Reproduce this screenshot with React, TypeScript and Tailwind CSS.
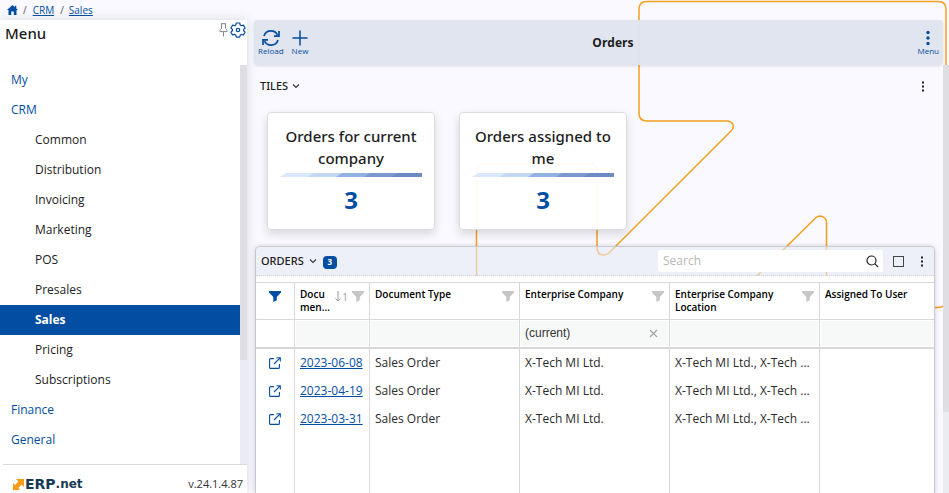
import type { ReactNode } from "react";

type MenuEntry = { label: string; level: 0 | 1; active?: boolean };

const menuEntries: MenuEntry[] = [
  { label: "My", level: 0 },
  { label: "CRM", level: 0 },
  { label: "Common", level: 1 },
  { label: "Distribution", level: 1 },
  { label: "Invoicing", level: 1 },
  { label: "Marketing", level: 1 },
  { label: "POS", level: 1 },
  { label: "Presales", level: 1 },
  { label: "Sales", level: 1, active: true },
  { label: "Pricing", level: 1 },
  { label: "Subscriptions", level: 1 },
  { label: "Finance", level: 0 },
  { label: "General", level: 0 },
];

const tiles = [
  { title: "Orders for current company", value: 3 },
  { title: "Orders assigned to me", value: 3 },
];

const orders = [
  { date: "2023-06-08", type: "Sales Order", company: "X-Tech MI Ltd.", location: "X-Tech MI Ltd., X-Tech ..." },
  { date: "2023-04-19", type: "Sales Order", company: "X-Tech MI Ltd.", location: "X-Tech MI Ltd., X-Tech ..." },
  { date: "2023-03-31", type: "Sales Order", company: "X-Tech MI Ltd.", location: "X-Tech MI Ltd., X-Tech ..." },
];

function Backdrop() {
  return (
    <svg className="pointer-events-none absolute left-0 top-0" width="949" height="493" fill="none" stroke="#f59f1e" strokeWidth="1.5" aria-hidden="true">
      <path d="M476.500 493V171q0-7 7-7H590q7 0 7 7V247q0 8 6 8q3 0 6-2L731 131q4-4 1-8q-2-2-5-2H647q-8 0-8-8V9q0-7.500 8-7.500H938q8 0 8 7.500V300q0 7.500-8 7.500H834q-7.500 0-7.500-7V223q0-6-6-7q-3 0-5 2L700 332" />
    </svg>
  );
}

function HomeIcon() {
  return (
    <svg width="11" height="10" viewBox="0 0 11 10" fill="#034ea2" aria-hidden="true">
      <path d="M5.500 0 0 5h1.500v5h2.700V6.500h2.600V10h2.700V5H11L9.300 3.400V.8H8v1.400z" />
    </svg>
  );
}

function PinIcon() {
  return (
    <svg width="9" height="14" viewBox="0 0 9 14" fill="none" stroke="#83878c" aria-hidden="true">
      <path d="M2 .700h5M2.500.800v4.700C1.500 6.200.900 7.200.900 8.600h7.200c0-1.400-.6-2.400-1.600-3.100V.800M4.500 8.800v4.700" />
    </svg>
  );
}

function GearIcon() {
  return (
    <svg width="16" height="16" viewBox="0 0 16 16" fill="none" stroke="#034ea2" strokeWidth="1.200" strokeLinejoin="round" aria-hidden="true">
      <path d="M6.300 1h3.400l.5 2 1.200.7 2-.6 1.700 2.900-1.500 1.400v1.300l1.500 1.400-1.700 2.900-2-.6-1.200.7-.5 2H6.300l-.5-2-1.200-.7-2 .6-1.700-2.900 1.500-1.400V7.400L.900 6l1.700-2.900 2 .6L5.800 3z" />
      <circle cx="8" cy="8" r="1.700" />
    </svg>
  );
}

function ReloadIcon() {
  return (
    <svg width="18" height="16" viewBox="0 0 18 16" fill="none" stroke="#034ea2" strokeWidth="1.700" aria-hidden="true">
      <path d="M2 6C3 2.700 5.700.900 9 .900c3 0 5.100 1.300 6.500 4M17 1v5.200h-5M16 10c-1 3.300-3.700 5.100-7 5.100-3 0-5.100-1.300-6.500-4M1 15V9.800h5" />
    </svg>
  );
}

function PlusIcon() {
  return (
    <svg width="16" height="16" viewBox="0 0 16 16" stroke="#034ea2" strokeWidth="1.500" strokeLinecap="round" aria-hidden="true">
      <path d="M8 1v14M1 8h14" />
    </svg>
  );
}

function ChevronIcon() {
  return (
    <svg width="8" height="6" viewBox="0 0 8 6" fill="none" stroke="#333" strokeWidth="1.100" aria-hidden="true">
      <path d="m1 1.500 3 3 3-3" />
    </svg>
  );
}

function DotsIcon() {
  return (
    <svg width="4" height="11" viewBox="0 0 4 11" fill="#222" aria-hidden="true">
      <path d="M1 0.500h2v2H1zM1 4.500h2v2H1zM1 8.500h2v2H1z" />
    </svg>
  );
}

function FunnelIcon({ color }: { color: string }) {
  return (
    <svg className="shrink-0" width="12" height="11" viewBox="0 0 12 11" fill={color} aria-hidden="true">
      <path d="M0 0h12v1.500L7.800 6v3.300L4.300 11V6L0 1.500z" />
    </svg>
  );
}

function OpenIcon() {
  return (
    <svg width="12" height="12" viewBox="0 0 12 12" fill="none" stroke="#034ea2" strokeWidth="1.100" aria-hidden="true">
      <path d="M5 1.600H1.600q-1 0-1 1v7.800q0 1 1 1h7.800q1 0 1-1V7M5 7l5.800-5.800M7.500.700h3.800v3.800" />
    </svg>
  );
}

function HeadCell({ children, icons }: { children: ReactNode; icons?: ReactNode }) {
  return (
    <th className="h-[37px] border-l border-t border-[#d8d8d8] px-[5px] py-[5px] text-left align-top text-[10px] font-semibold leading-[13px] text-black">
      <div className="flex items-start justify-between">
        <span>{children}</span>
        <span className="flex items-center gap-1 pt-[3px]">{icons}</span>
      </div>
    </th>
  );
}

function FilterCell({ label, value = "" }: { label: string; value?: string }) {
  return (
    <td className="h-[30px] border-b-2 border-l border-t border-[#d8d8d8] p-px">
      <div className="flex h-full items-center bg-[#f7f9f9] pl-1 pr-[10px]">
        <input aria-label={label} defaultValue={value} className="h-[24px] w-full min-w-0 bg-transparent pb-px font-['Liberation_Sans',Arial,sans-serif] text-[12px] text-[#333] outline-none" />
        {value && (
          <button aria-label="Clear filter">
            <svg width="9" height="9" viewBox="0 0 9 9" stroke="#a4a4a4" strokeWidth="1.200" aria-hidden="true">
              <path d="m1 1 7 7M8 1 1 8" />
            </svg>
          </button>
        )}
      </div>
    </td>
  );
}

function Sidebar() {
  return (
    <aside className="relative flex w-[247px] shrink-0 flex-col bg-white shadow-[0_0_10px_rgba(60,60,90,0.16)]">
      <div className="flex h-[45px] shrink-0 items-start justify-between pl-[5px] pr-px pt-[2px]">
        <h2 className="font-['Noto_Sans',sans-serif] text-[15px] font-medium leading-[22px] text-[#1d1d1d]">Menu</h2>
        <div className="flex items-center gap-[2px]">
          <button aria-label="Pin menu"><PinIcon /></button>
          <button aria-label="Settings"><GearIcon /></button>
        </div>
      </div>
      <div className="flex min-h-0 flex-1">
        <nav className="min-w-0 flex-1 overflow-hidden">
          {menuEntries.map((entry) => (
            <a
              key={entry.label}
              href="#"
              className={`block h-[30px] text-[12px] leading-[29px] ${entry.level ? "pl-[35px]" : "pl-[11px] text-[#034ea2]"} ${
                entry.active ? "bg-[#034ea2] font-bold text-white" : entry.level ? "text-[#222]" : ""
              }`}
            >
              {entry.label}
            </a>
          ))}
        </nav>
        <div className="w-[7px] bg-[#ebebf2]">
          <div className="h-[74%] bg-[#dedee3]" />
        </div>
      </div>
      <div className="ml-[3px] flex h-[29px] shrink-0 items-center justify-between border-t border-[#d9dade] pl-[10px] pr-1 pt-[10px]">
        <div className="flex items-center font-['DejaVu_Sans',sans-serif] font-bold leading-[14px] text-[#173a54]">
          <svg width="11" height="11" viewBox="0 0 11 11" fill="#f59c1a" aria-hidden="true">
            <path d="M3 0h8v8L8.700 5.700 5.300 9l1.900 2H0V4l2 2 3.400-3.600z" />
          </svg>
          <span className="pl-px text-[14px]">ERP</span>
          <span className="text-[12px]">.net</span>
        </div>
        <span className="text-[11px] leading-[14px] text-[#333]">v.24.1.4.87</span>
      </div>
    </aside>
  );
}

function Toolbar() {
  return (
    <header className="flex h-[45px] shrink-0 items-center rounded-[4px] bg-[#dfe4ee]/95 px-1 text-[8px] leading-[8px] text-[#034ea2] shadow-[0_1px_3px_rgba(0,0,0,0.12)]">
      <div className="flex gap-2">
        <button className="flex flex-col items-center gap-px"><ReloadIcon />Reload</button>
        <button className="flex flex-col items-center gap-px"><PlusIcon />New</button>
      </div>
      <h1 className="flex-1 text-center text-[12px] font-bold leading-[16px] text-[#1c1c1c]">Orders</h1>
      <button className="flex flex-col items-center gap-px">
        <svg width="4" height="16" viewBox="0 0 4 16" fill="#034ea2" aria-hidden="true">
          <circle cx="2" cy="2.500" r="1.700" /><circle cx="2" cy="8" r="1.700" /><circle cx="2" cy="13.500" r="1.700" />
        </svg>
        Menu
      </button>
    </header>
  );
}

function Tile({ title, value }: { title: string; value: number }) {
  return (
    <article className="flex h-[118px] w-[168px] flex-col items-center rounded-[4px] border border-[#dcdce0] bg-white/95 px-3 pt-3 text-center shadow-[0_4px_10px_rgba(0,0,0,0.14)]">
      <h3 className="font-['Noto_Sans',sans-serif] text-[15px] font-medium leading-[22px] text-[#1d1d1d]">{title}</h3>
      <svg className="mt-1 shrink-0" width="142" height="4" viewBox="0 0 142 4" aria-hidden="true">
        <path d="M6 0h136v4H0z" fill="#dbe8f9" />
        <path d="M34 0h108v4H28z" fill="#c3d7f1" />
        <path d="M62 0h80v4H56z" fill="#92b2df" />
        <path d="M90 0h52v4H84z" fill="#7c98cf" />
        <path d="M118 0h24v4H111z" fill="#6c8ac4" />
      </svg>
      <p className="mt-[5px] text-[24px] font-bold leading-[36px] text-[#034ea2]">{value}</p>
    </article>
  );
}

function OrdersPanel() {
  const grayFunnel = <FunnelIcon color="#c6c6c6" />;
  return (
    <section className="ml-px mr-2 flex min-h-0 flex-1 flex-col overflow-hidden rounded-t-[5px] border border-b-0 border-[#c9cad0] shadow-[0_0_5px_rgba(0,0,0,0.18)]">
      <div className="flex h-[29px] shrink-0 items-center border-b border-dotted border-[#cdd0dc] bg-[#e6eaf5]/60 pl-[5px] pr-[10px]">
        <h2 className="font-['Noto_Sans',sans-serif] text-[11px] font-medium text-[#1c1c1c]">ORDERS</h2>
        <button aria-label="Collapse orders" className="pl-[5px]"><ChevronIcon /></button>
        <span className="ml-[6px] mt-[2px] h-[13px] w-[14px] rounded-[4px] bg-[#034ea2] text-center text-[8px] font-bold leading-[12px] text-white">3</span>
        <div className="ml-auto flex h-[22px] w-[225px] items-center rounded-[2px] bg-white pl-[5px] pr-1">
          <input type="search" aria-label="Search" placeholder="Search" className="w-full min-w-0 text-[12px] outline-none placeholder:text-[#b8b8b8]" />
          <button aria-label="Run search">
            <svg width="13" height="13" viewBox="0 0 13 13" fill="none" stroke="#222" strokeWidth="1.200" aria-hidden="true">
              <circle cx="5.500" cy="5.500" r="4.500" /><path d="m8.700 8.700 3.500 3.500" />
            </svg>
          </button>
        </div>
        <button aria-label="Maximize" className="ml-[10px] size-[11px] border border-[#444]" />
        <button aria-label="Orders options" className="ml-4"><DotsIcon /></button>
      </div>
      <div className="min-h-0 flex-1 bg-white pt-[6px]">
        <table className="h-full w-full table-fixed border-separate border-spacing-0 text-[12px] text-[#2b2b2b]">
          <colgroup>
            <col className="w-[38px]" /><col className="w-[75px]" /><col className="w-[150px]" /><col className="w-[150px]" /><col className="w-[150px]" /><col />
          </colgroup>
          <thead>
            <tr>
              <th className="border-t border-[#d8d8d8] pt-2 align-top">
                <button aria-label="Toggle filters" className="mx-auto block"><FunnelIcon color="#034ea2" /></button>
              </th>
              <HeadCell
                icons={
                  <>
                    <span className="flex items-center gap-px text-[10px] font-normal leading-[10px] text-[#999]">
                      <svg width="6" height="11" viewBox="0 0 6 11" fill="none" stroke="#999" aria-hidden="true"><path d="M3 0v10M.500 7.500 3 10l2.500-2.500" /></svg>1
                    </span>
                    {grayFunnel}
                  </>
                }
              >
                Docu<br />men...
              </HeadCell>
              <HeadCell icons={grayFunnel}>Document Type</HeadCell>
              <HeadCell icons={grayFunnel}>Enterprise Company</HeadCell>
              <HeadCell icons={grayFunnel}>Enterprise Company Location</HeadCell>
              <HeadCell>Assigned To User</HeadCell>
            </tr>
            <tr>
              <td className="border-b-2 border-t border-[#d8d8d8]" />
              <FilterCell label="Document filter" />
              <FilterCell label="Document type filter" />
              <FilterCell label="Enterprise company filter" value="(current)" />
              <FilterCell label="Location filter" />
              <FilterCell label="Assigned user filter" />
            </tr>
          </thead>
          <tbody>
            {orders.map((order) => (
              <tr key={order.date} className="h-7">
                <td><a href="#" aria-label={`Open ${order.date}`} className="flex justify-center"><OpenIcon /></a></td>
                <td className="border-l border-[#d8d8d8] pl-[5px]"><a href="#" className="text-[#034ea2] underline">{order.date}</a></td>
                <td className="border-l border-[#d8d8d8] pl-[5px]">{order.type}</td>
                <td className="border-l border-[#d8d8d8] pl-[5px]">{order.company}</td>
                <td className="whitespace-nowrap border-l border-[#d8d8d8] pl-[5px]">{order.location}</td>
                <td className="border-l border-[#d8d8d8]" />
              </tr>
            ))}
            <tr>
              <td />
              <td className="border-l border-[#d8d8d8]" />
              <td className="border-l border-[#d8d8d8]" />
              <td className="border-l border-[#d8d8d8]" />
              <td className="border-l border-[#d8d8d8]" />
              <td className="border-l border-[#d8d8d8]" />
            </tr>
          </tbody>
        </table>
      </div>
    </section>
  );
}

export default function App() {
  return (
    <div className="relative flex h-screen flex-col overflow-hidden bg-[#f9f9ff] font-['Open_Sans','Noto_Sans',sans-serif]">
      <Backdrop />
      <nav aria-label="Breadcrumb" className="relative flex h-5 shrink-0 items-center gap-[5px] pl-[7px] text-[10px] text-[#555]">
        <a href="#" aria-label="Home"><HomeIcon /></a>
        <span>/</span>
        <a href="#" className="ml-px text-[#034ea2] underline">CRM</a>
        <span className="ml-px">/</span>
        <a href="#" className="text-[#034ea2] underline">Sales</a>
      </nav>
      <div className="relative flex min-h-0 flex-1">
        <Sidebar />
        <div className="flex min-w-0 flex-1 flex-col">
          <div className="flex flex-col pl-[7px] pr-[6px]"><Toolbar /></div>
          <div className="flex min-h-0 flex-1">
            <main className="flex min-w-0 flex-1 flex-col pl-[7px]">
              <div className="flex h-[42px] shrink-0 items-center pl-[6px] pr-[18px]">
                <h2 className="font-['Noto_Sans',sans-serif] text-[11px] font-medium text-[#1c1c1c]">TILES</h2>
                <button aria-label="Collapse tiles" className="pl-1"><ChevronIcon /></button>
                <button aria-label="Tiles options" className="ml-auto"><DotsIcon /></button>
              </div>
              <div className="flex shrink-0 gap-6 pb-4 pl-[13px] pt-[5px]">
                {tiles.map((tile) => (
                  <Tile key={tile.title} {...tile} />
                ))}
              </div>
              <OrdersPanel />
            </main>
            <div className="w-[6px] bg-[#ebebf2]">
              <div className="h-[81%] bg-[#dedee3]" />
            </div>
          </div>
        </div>
      </div>
    </div>
  );
}
